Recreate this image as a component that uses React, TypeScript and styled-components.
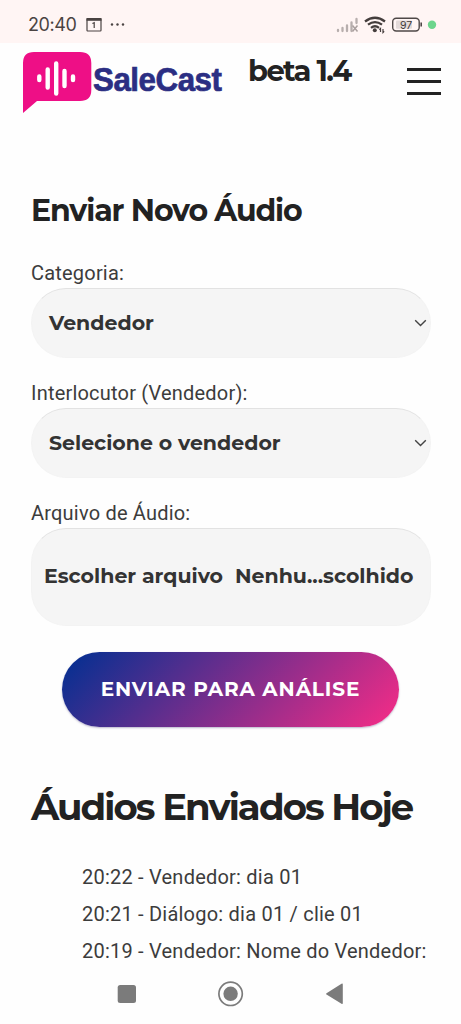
import React from 'react';
import styled, { createGlobalStyle } from 'styled-components';

const GlobalStyle = createGlobalStyle`
  * { box-sizing: border-box; }
  html, body { margin: 0; background: #fefefe; overflow: hidden; }
  body { font-family: Roboto, "Liberation Sans", sans-serif; color: #3c3c3c; }
`;

const Screen = styled.div`
  width: 461px;
  height: 1024px;
  display: flex;
  flex-direction: column;
  overflow: hidden;
`;

const StatusBar = styled.div`
  height: 43px;
  flex: none;
  padding: 7px 24px 0 28px;
  display: flex;
  align-items: center;
  background: #fff5f4;
  color: #4a4342;
`;

const Clock = styled.span`
  width: 58px;
  font: 400 18px/24px Inter, sans-serif;
  letter-spacing: -0.4px;
  white-space: nowrap;
`;

const StatusIcons = styled.svg`
  display: block;
  margin-left: auto;
`;

const Header = styled.header`
  height: 89px;
  flex: none;
  display: flex;
  align-items: flex-start;
  padding: 8px 20px 0 22px;
`;

const Logo = styled.div`
  display: flex;
  width: 226px;
`;

const Brand = styled.span`
  margin: 11px 0 0 1px;
  font: 700 34px/34px "Liberation Sans", sans-serif;
  letter-spacing: -0.5px;
  color: #2b2e83;
  -webkit-text-stroke: 0.7px #2b2e83;
  white-space: nowrap;
  transform: scaleX(0.92);
  transform-origin: left;
`;

const Version = styled.span<{ $spacing: number }>`
  font: 700 29px/34px Montserrat, Inter, sans-serif;
  letter-spacing: ${(p) => p.$spacing}px;
  color: #222;
  margin-top: 3px;
  white-space: nowrap;
`;

const MenuButton = styled.button`
  margin: 17px 0 0 auto;
  padding: 0;
  width: 34px;
  height: 27px;
  border: 0;
  background: none;
  display: flex;
  flex-direction: column;
  justify-content: space-between;
`;

const MenuLine = styled.span`
  height: 3px;
  width: 100%;
  background: #222;
`;

const Main = styled.main`
  flex: 1;
  min-height: 0;
  padding: 59px 31px 0;
`;

const Heading = styled.h2<{ $size: number; $spacing: number }>`
  margin: 0;
  height: 40px;
  font: 700 ${(p) => p.$size}px/40px Montserrat, Inter, sans-serif;
  letter-spacing: ${(p) => p.$spacing}px;
  color: #222;
  white-space: nowrap;
`;

const Form = styled.form`
  display: flex;
  flex-direction: column;
  padding-top: 30px;
`;

const Label = styled.label`
  height: 27px;
  font-size: 20px;
  line-height: 24px;
  letter-spacing: 0.2px;
  white-space: nowrap;
`;

const Field = styled.div<{ $height: number; $file?: boolean }>`
  height: ${(p) => p.$height}px;
  width: 400px;
  margin-bottom: ${(p) => (p.$file ? 26 : 23)}px;
  padding: 0 3px ${(p) => (p.$file ? 2 : 1)}px ${(p) => (p.$file ? 12 : 17)}px;
  border: 1px solid #f3f3f3;
  border-top-color: #e2e2e2;
  border-radius: 35px;
  background: #f5f5f5;
  display: flex;
  align-items: center;
`;

const Value = styled.span<{ $width?: number }>`
  width: ${(p) => (p.$width ? `${p.$width}px` : 'auto')};
  font: 700 20.5px/26px Montserrat, Inter, sans-serif;
  color: #333;
  white-space: nowrap;
`;

const Chevron = styled.svg`
  display: block;
  margin-left: auto;
`;

const Submit = styled.button`
  width: 337px;
  height: 75px;
  margin-left: 31px;
  padding: 0 0 2px;
  border: 0;
  border-radius: 38px;
  background: linear-gradient(135deg, #0b2f91 5%, #f02c87 97%);
  box-shadow: 0 1px 2px rgba(60, 50, 110, 0.35);
  color: #fff;
  font: 700 20px/26px Montserrat, Inter, sans-serif;
  letter-spacing: 0.9px;
  white-space: nowrap;
`;

const Sent = styled.section`
  padding-top: 60px;
`;

const List = styled.ul`
  list-style: none;
  margin: 0;
  padding: 32px 0 0 51px;
`;

const Item = styled.li`
  height: 37px;
  font-size: 20px;
  line-height: 37px;
  letter-spacing: 0.22px;
  white-space: nowrap;
`;

const NavBar = styled.nav`
  height: 57px;
  flex: none;
  display: flex;
  justify-content: center;
  background: #fefefe;
`;

const SelectArrow = () => (
  <Chevron width="13" height="8" viewBox="0 0 13 8">
    <path d="M1.2 1.2 6.5 6.5 11.8 1.2" fill="none" stroke="#444" strokeWidth="1.4" />
  </Chevron>
);

export default function App() {
  return (
    <Screen>
      <GlobalStyle />
      <StatusBar>
        <Clock>20:40</Clock>
        <svg width="40" height="16" viewBox="0 0 40 16">
          <rect x="1" y="1.5" width="14" height="12.5" rx="0.8" fill="none" stroke="#4a4342" strokeWidth="1.2" />
          <path d="M.5 2.5h15" stroke="#4a4342" strokeWidth="2.6" />
          <path d="M6.4 6.5 8.2 5.6V11" fill="none" stroke="#4a4342" strokeWidth="1.2" />
          <g fill="#4a4342"><circle cx="26" cy="7.5" r="1.2" /><circle cx="31.5" cy="7.5" r="1.2" /><circle cx="37" cy="7.5" r="1.2" /></g>
        </svg>
        <StatusIcons width="101" height="18" viewBox="336 16 101 18">
          <path d="M338 30v1M342.500 28v3M347 25.500v5.500M351.500 22.500v8.500M356.500 19v4" stroke="#b7aead" strokeWidth="2.3" strokeLinecap="round" fill="none" />
          <path d="m352.500 25.500 5 6m0-6-5 6" stroke="#aaa09f" strokeWidth="1.5" />
          <g fill="none" stroke="#443d3c" strokeWidth="2.3">
            <path d="M365 21.500Q375 14 385 21.500" />
            <path d="M368 24.700Q375 19.500 382 24.700" />
            <path d="M371 27.800Q375 24.800 379 27.800" />
          </g>
          <circle cx="374.800" cy="30.300" r="2" fill="#443d3c" />
          <path d="M380.500 32v-3.500l-1.200 1.200M383 29v3.500l1.200-1.200" fill="none" stroke="#443d3c" strokeWidth="1.200" />
          <rect x="392.700" y="18.200" width="26.500" height="12.800" rx="3.500" fill="#fff5f4" stroke="#4f4847" strokeWidth="1.4" />
          <rect x="396" y="20.500" width="16" height="8.200" rx="1" fill="#e3dad9" />
          <path d="M421.200 22.500v4" stroke="#4f4847" strokeWidth="1.600" />
          <text x="406" y="28.500" textAnchor="middle" fontFamily="Inter, sans-serif" fontWeight="400" fontSize="10.500" fill="#3f3938">97</text>
          <circle cx="432" cy="24.700" r="4.200" fill="#6cd58c" />
        </StatusIcons>
      </StatusBar>
      <Header>
        <Logo>
          <svg width="70" height="63" viewBox="22 51 70 63">
            <path d="M34 52H80Q91.300 52 91.300 63V90Q91.300 101 80 101H37L23 113V63Q23 52 34 52Z" fill="#ee0f86" />
            <path d="M39.300 76.500v3.500M47.700 69.500v18M56.200 63.500v30M64.500 71v15M73 76.500v3.500" stroke="#fff" strokeWidth="4.400" strokeLinecap="round" />
          </svg>
          <Brand>SaleCast</Brand>
        </Logo>
        <Version $spacing={-1.6}>beta 1.4</Version>
        <MenuButton aria-label="Menu"><MenuLine /><MenuLine /><MenuLine /></MenuButton>
      </Header>
      <Main>
        <Heading $size={30} $spacing={-1.1}>Enviar Novo Áudio</Heading>
        <Form>
          <Label>Categoria:</Label>
          <Field $height={70}><Value>Vendedor</Value><SelectArrow /></Field>
          <Label>Interlocutor (Vendedor):</Label>
          <Field $height={70}><Value>Selecione o vendedor</Value><SelectArrow /></Field>
          <Label>Arquivo de Áudio:</Label>
          <Field $height={98} $file>
            <Value $width={191}>Escolher arquivo</Value>
            <Value>Nenhu...scolhido</Value>
          </Field>
          <Submit type="button">ENVIAR PARA ANÁLISE</Submit>
        </Form>
        <Sent>
          <Heading as="h1" $size={37} $spacing={-1.9}>Áudios Enviados Hoje</Heading>
          <List>
            <Item>20:22 - Vendedor: dia 01</Item>
            <Item>20:21 - Diálogo: dia 01 / clie 01</Item>
            <Item>20:19 - Vendedor: Nome do Vendedor:</Item>
          </List>
        </Sent>
      </Main>
      <NavBar>
        <svg width="461" height="57" viewBox="0 967 461 57" fill="#7b7b7b">
          <rect x="117.700" y="985" width="18.300" height="18" rx="2.500" />
          <circle cx="230.600" cy="993.800" r="11.700" fill="none" stroke="#7b7b7b" strokeWidth="1.700" />
          <circle cx="230.600" cy="993.800" r="7.200" />
          <path d="M326.500 993.200 341.500 983.800Q342.800 983 342.800 984.500V1003Q342.800 1004.500 341.500 1003.700L326.500 994.500Q325.500 993.900 326.500 993.200Z" />
        </svg>
      </NavBar>
    </Screen>
  );
}
